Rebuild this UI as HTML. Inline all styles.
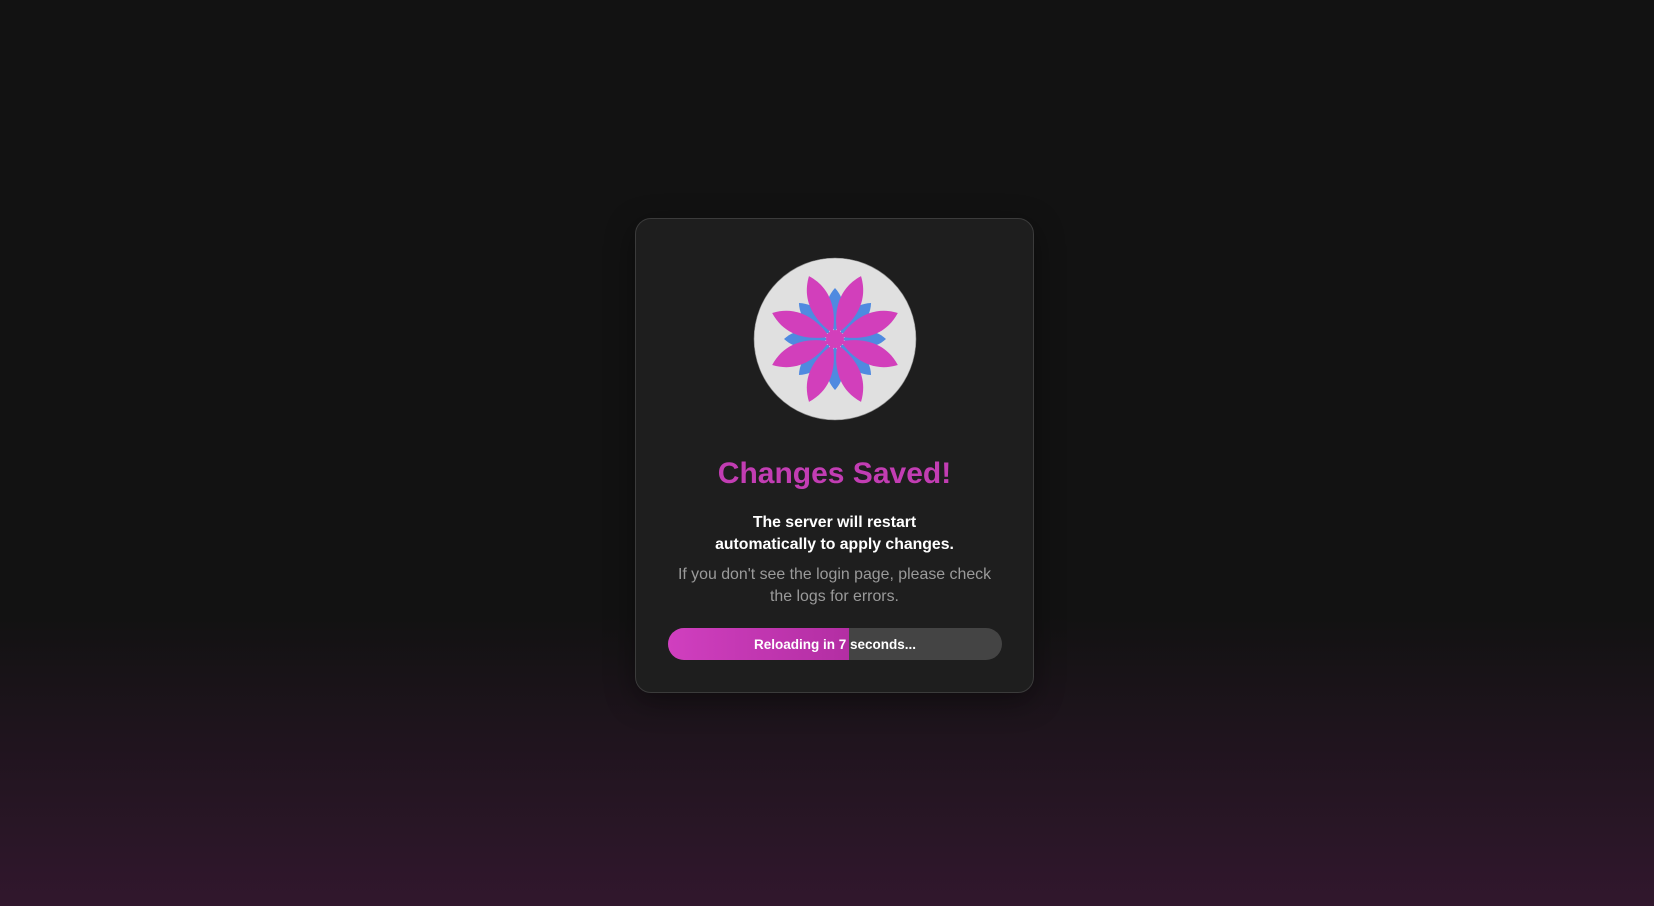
<!DOCTYPE html>
<html><head><meta charset="utf-8"><style>
html,body{margin:0;padding:0;}
body{width:1654px;height:906px;overflow:hidden;position:relative;
background:linear-gradient(180deg,#121212 0%,#121212 68%,#31172d 100%);
font-family:"Liberation Sans",sans-serif;}
.card{position:absolute;left:635px;top:218px;width:397px;height:473px;background:#1e1e1e;border:1px solid #3b3b3b;border-radius:16px;box-shadow:0 8px 30px rgba(0,0,0,.4);}
.logo{position:absolute;left:117px;top:38px;}
h1{position:absolute;left:0;right:0;top:235px;margin:0;text-align:center;color:#c23db3;font-size:30px;font-weight:bold;line-height:40px;}
.b{position:absolute;left:0;right:0;top:293px;text-align:center;color:#fff;font-weight:bold;font-size:15.8px;line-height:22px;}
.g{position:absolute;left:0;right:0;top:345px;text-align:center;color:#9a9a9a;font-size:15.9px;line-height:22px;}
.bar{position:absolute;left:32px;top:409px;width:334px;height:32px;border-radius:16px;background:#444;overflow:hidden;}
.fill{position:absolute;left:0;top:0;bottom:0;width:181px;background:linear-gradient(90deg,#d03fbf,#b32ea3);}
.bt{position:absolute;left:0;right:0;top:1px;line-height:32px;text-align:center;color:#fff;font-weight:bold;font-size:13.5px;}
</style></head><body>
<div class="card">
<svg class="logo" width="164" height="164" viewBox="-82 -82 164 164">
<circle r="81" fill="#e0e0e0" stroke="#888" stroke-width="0.6"/>
<g fill="#4f8ae0">
<path id="bp" d="M0,-8 C11,-20 12,-38 0,-51 C-12,-38 -11,-20 0,-8Z"/>
<use href="#bp" transform="rotate(45)"/><use href="#bp" transform="rotate(90)"/><use href="#bp" transform="rotate(135)"/>
<use href="#bp" transform="rotate(180)"/><use href="#bp" transform="rotate(225)"/><use href="#bp" transform="rotate(270)"/><use href="#bp" transform="rotate(315)"/>
</g>
<g fill="#d23fbb">
<path id="pp" d="M0,-6 C10,-22 18,-46 0,-68 C-18,-46 -10,-22 0,-6Z" transform="rotate(22.5)"/>
<use href="#pp" transform="rotate(45)"/><use href="#pp" transform="rotate(90)"/><use href="#pp" transform="rotate(135)"/>
<use href="#pp" transform="rotate(180)"/><use href="#pp" transform="rotate(225)"/><use href="#pp" transform="rotate(270)"/><use href="#pp" transform="rotate(315)"/>
</g>
<circle r="9" fill="#d23fbb"/>
</svg>
<h1>Changes Saved!</h1>
<div class="b">The server will restart<br>automatically to apply changes.</div>
<div class="g">If you don't see the login page, please check<br>the logs for errors.</div>
<div class="bar"><div class="fill"></div><div class="bt">Reloading in 7 seconds...</div></div>
</div>
</body></html>
